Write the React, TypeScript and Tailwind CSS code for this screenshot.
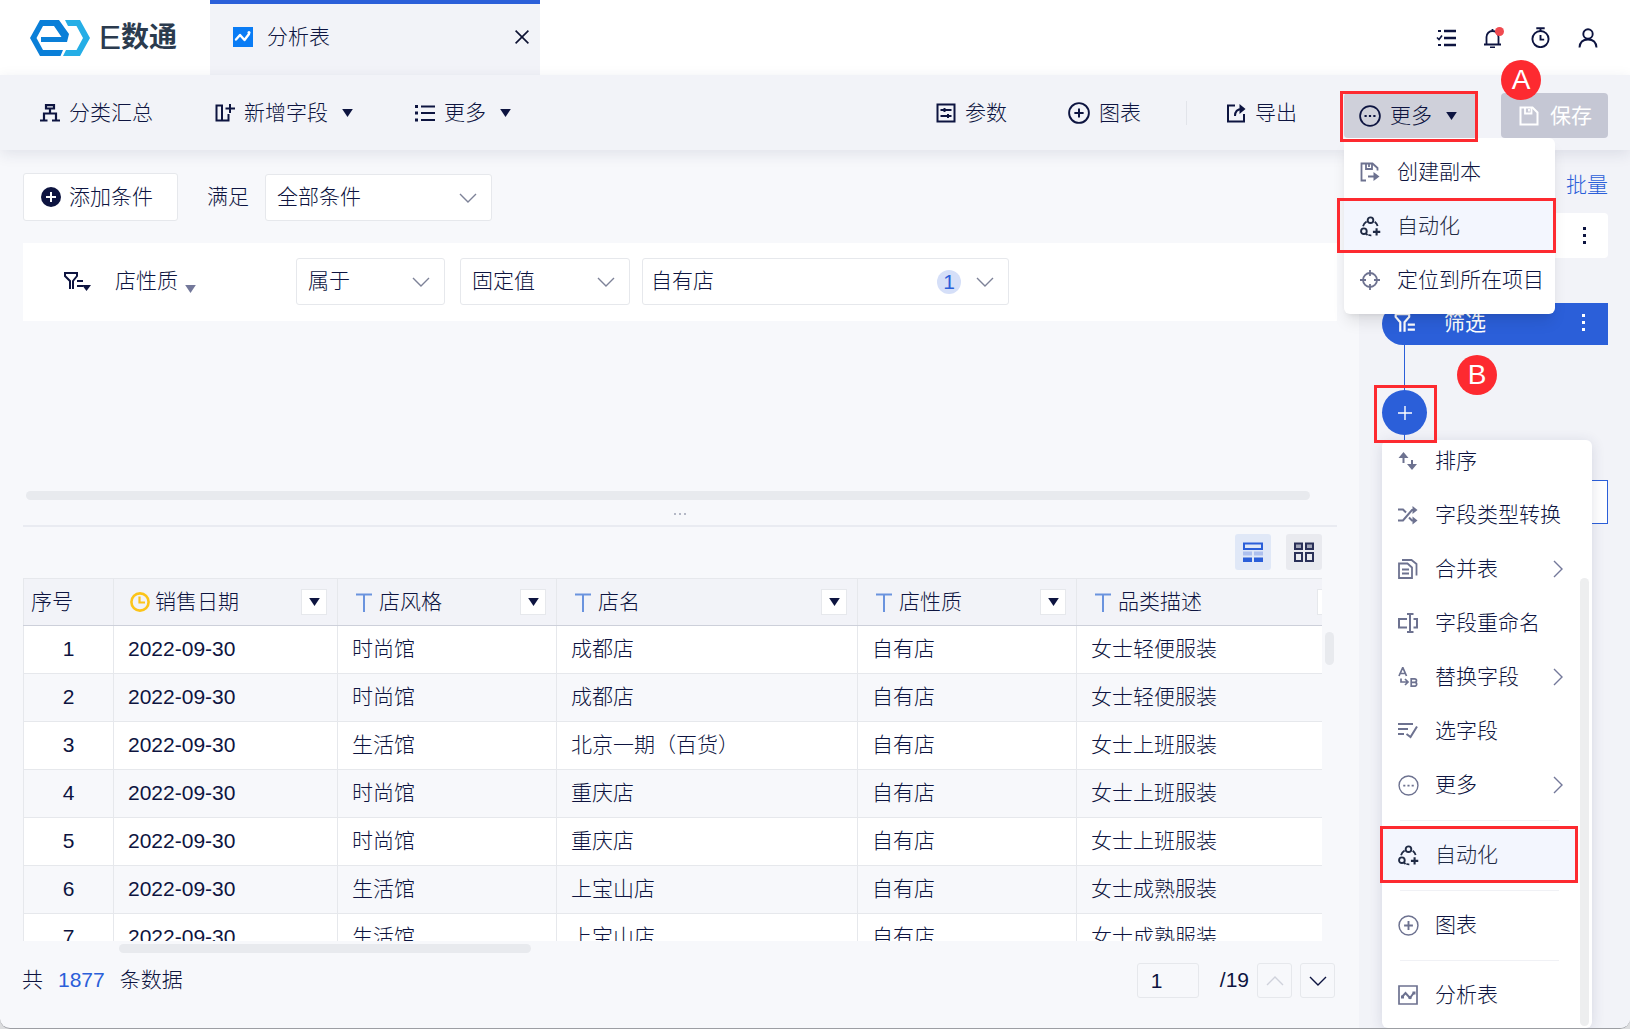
import type { ReactNode } from "react";

const FONT = "font-['Liberation_Sans','Noto_Sans_CJK_SC',sans-serif]";

type IconProps = { children: ReactNode; className?: string; size?: number };

function Icon({ children, className = "", size = 20 }: IconProps) {
  return (
    <svg
      width={size}
      height={size}
      viewBox="0 0 20 20"
      fill="none"
      stroke="currentColor"
      strokeWidth="2"
      className={`shrink-0 ${className}`}
      aria-hidden="true"
    >
      {children}
    </svg>
  );
}

const Caret = ({ className = "" }: { className?: string }) => (
  <svg width="11" height="8" viewBox="0 0 12 9" fill="currentColor" className={`shrink-0 ${className}`} aria-hidden="true">
    <path d="M0 0h12L6 9z" />
  </svg>
);

const Chevron = ({ className = "" }: { className?: string }) => (
  <svg width="18" height="10" viewBox="0 0 18 10" fill="none" stroke="currentColor" strokeWidth="1.4" className={className} aria-hidden="true">
    <path d="M1 1l8 8 8-8" />
  </svg>
);

const ChevronRight = () => (
  <svg width="10" height="18" viewBox="0 0 10 18" fill="none" stroke="currentColor" strokeWidth="1.4" aria-hidden="true">
    <path d="M1 1l8 8-8 8" />
  </svg>
);

const Kebab = () => (
  <svg width="4" height="18" viewBox="0 0 4 18" fill="currentColor" aria-hidden="true">
    <path d="M0 0h3v3H0zM0 7h3v3H0zM0 14h3v3H0z" />
  </svg>
);

const MoreIcon = ({ size = 22, thin = false }: { size?: number; thin?: boolean }) => (
  <Icon size={size}>
    <circle cx="10" cy="10" r="9" strokeWidth={thin ? 1.3 : 1.6} />
    <path d="M5 9.2h2v1.8H5zM9 9.2h2v1.8H9zM13 9.2h2v1.8h-2z" fill="currentColor" stroke="none" />
  </Icon>
);

const PlusCircle = ({ size = 22, thin = false }: { size?: number; thin?: boolean }) => (
  <Icon size={size}>
    <circle cx="10" cy="10" r="9" strokeWidth={thin ? 1.4 : 1.7} />
    <path d="M10 5.8v8.4M5.8 10h8.4" strokeWidth="1.8" />
  </Icon>
);

const AutomationIcon = () => (
  <Icon size={21}>
    <circle cx="10" cy="4" r="2.7" strokeWidth="1.8" />
    <circle cx="3.7" cy="14.5" r="2.7" strokeWidth="1.8" />
    <path d="M6.3 5.2C4.4 6.400 3.300 7.800 2.900 9.800M14 5.500c1.500 1.200 2.400 2.500 2.800 4M5.600 16.600l1.600 1.600M8 17.800c1 .5 1.800 .7 2.800 .6" strokeWidth="1.7" />
    <path d="M15.8 11.6v7M12.3 15.1h7" strokeWidth="2" />
  </Icon>
);

const SaveIcon = () => (
  <Icon>
    <path d="M1.5 1.5h12l5 5v12h-17z" />
    <path d="M6 2v5.5h6.5V2M10 3v2.5" strokeWidth="1.8" />
  </Icon>
);

const FunnelIcon = () => (
  <Icon size={22}>
    <path d="M1 2h13.5M1.5 2v2.5l4.2 4.8V18M13.8 2v2.5L9.6 9.3V18M12.5 11.5H19M12.5 16H19" strokeWidth="2" />
  </Icon>
);

function Logo() {
  return (
    <div className="flex w-[210px] shrink-0 items-center gap-[9px] pl-[30px]">
      <svg width="60" height="36" viewBox="0 0 60 36" aria-label="logo" role="img">
        <path d="M10 0h19l10 14-2 8H11v-5h20.500l-7.500-11H13L6.500 18 13 30h20l-2.500 6H10L0 18z" fill="#0a7fd8" />
        <path d="M35 0h15l10 18-10 18H33l3-6h10.500L53 18 46.500 6H38z" fill="#25aee6" />
      </svg>
      <div className="flex items-center leading-none text-[#2b3b4e]">
        <span className="text-[33px] font-normal">E</span>
        <span className="text-[28px] font-bold">数通</span>
      </div>
    </div>
  );
}

function Header() {
  return (
    <header className="flex h-[75px] shrink-0 bg-white">
      <Logo />
      <div className="flex w-[330px] items-center border-t-4 border-[#2b5fd9] bg-[#f2f3f8] pr-2.5 pb-1.5 pl-[23px]">
        <Icon>
          <path d="M0 0h20v20H0z" fill="#0a7cf5" stroke="none" />
          <path d="M3 12.500l4-4.500 4.500 5 4.500-6" stroke="#fff" strokeWidth="2.400" strokeLinecap="round" strokeLinejoin="round" />
          <path d="M14.500 5.500a1.500 1.500 0 103 0 1.500 1.500 0 10-3 0" fill="#fff" stroke="none" />
        </Icon>
        <span className="ml-[14px] flex-1">分析表</span>
        <button type="button" aria-label="关闭">
          <Icon size={16} className="text-[#0d1233]">
            <path d="M2 2l16 16M18 2L2 18" strokeWidth="2" />
          </Icon>
        </button>
      </div>
      <nav className="ml-auto flex items-center gap-[27px] pr-8">
        <button type="button" aria-label="任务">
          <Icon>
            <path d="M8 3h12M8 10h12M8 17h12" strokeWidth="2.400" />
            <path d="M1 9.500l2 2L6 7.500" strokeWidth="1.600" />
            <path d="M2 2h3v2H2zM2 16h3v2H2z" fill="currentColor" stroke="none" />
          </Icon>
        </button>
        <button type="button" aria-label="消息" className="relative">
          <Icon>
            <path d="M1 16.500h17M3.500 16.500V9a6 6 0 0112 0v7.500M9.500 1v2M7 19.300h5" strokeWidth="1.800" />
          </Icon>
          <span className="absolute -top-px left-3 size-[9px] rounded-full bg-[#f04a50]" />
        </button>
        <button type="button" aria-label="计时">
          <Icon size={21}>
            <circle cx="10" cy="11.500" r="7.700" strokeWidth="1.800" />
            <path d="M6 1.200h8M10 1v3M10 7.500V12h3.500" strokeWidth="1.800" />
          </Icon>
        </button>
        <button type="button" aria-label="用户">
          <Icon>
            <circle cx="10" cy="6" r="4.700" strokeWidth="1.900" />
            <path d="M1.500 19.500C1.800 14.500 5 11.500 10 11.500s8.200 3 8.500 8" strokeWidth="1.900" />
          </Icon>
        </button>
      </nav>
    </header>
  );
}

function ToolButton({ icon, label, caret }: { icon: ReactNode; label: string; caret?: boolean }) {
  return (
    <button type="button" className="flex items-center gap-[9px] whitespace-nowrap">
      {icon}
      <span>{label}</span>
      {caret && <Caret className="ml-[5px]" />}
    </button>
  );
}

const moreMenu = [
  {
    label: "创建副本",
    icon: (
      <Icon>
        <path d="M6 18.500H1.500v-17h11l5 4.500v2.500M6 2v5h6V2M9 2.500v2.500" strokeWidth="1.800" />
        <path d="M8 14.500h7" />
        <path d="M13.500 10l6 4.500-6 4.500z" fill="currentColor" stroke="none" />
      </Icon>
    ),
  },
  { label: "自动化", icon: <AutomationIcon />, active: true },
  {
    label: "定位到所在项目",
    icon: (
      <Icon>
        <circle cx="10" cy="10" r="7" strokeWidth="1.800" />
        <path d="M10 0v6M10 14v6M0 10h6M14 10h6" strokeWidth="1.800" />
      </Icon>
    ),
  },
];

function MoreMenu() {
  return (
    <div className="absolute top-full left-0 w-[211px] rounded-b-md rounded-tr-md bg-white py-[7px] shadow-lg">
      {moreMenu.map((item) => (
        <button
          key={item.label}
          type="button"
          className={`relative flex h-[54px] w-full items-center gap-4 pl-[16px] whitespace-nowrap ${
            item.active ? "bg-[#f3f6fe] text-[#1f2a44]" : ""
          }`}
        >
          <span className={`flex w-[21px] ${item.active ? "" : "text-[#6d7290]"}`}>{item.icon}</span>
          {item.label}
          {item.active && <span className="absolute -top-px bottom-0 -left-[7px] -right-px border-3 border-[#fd2a30]" />}
        </button>
      ))}
    </div>
  );
}

function Toolbar() {
  return (
    <div className="relative z-20 flex h-[75px] shrink-0 items-center bg-[#f2f3f8] pr-[22px] pl-10 shadow-[0_4px_14px_rgba(30,40,80,0.1)]">
      <div className="flex gap-[62px]">
        <ToolButton
          label="分类汇总"
          icon={
            <Icon>
              <path d="M6 2.200h8v3.300H6zM10 5.500v5M4 17v-6.500h12V17M0 17.500h7.500M12 17.500h8" strokeWidth="2.200" />
            </Icon>
          }
        />
        <ToolButton
          label="新增字段"
          caret
          icon={
            <Icon>
              <path d="M1.500 2.500h5.500v15H1.500zM7 17.500h6.500V11M15 1v9M10.500 5.500H20" />
            </Icon>
          }
        />
        <ToolButton
          label="更多"
          caret
          icon={
            <Icon>
              <path d="M6 3.500h14M6 10h14M6 17h14" />
              <path d="M0 2h3v3H0zM0 8.500h3v3H0zM0 15.500h3v3H0z" fill="currentColor" stroke="none" />
            </Icon>
          }
        />
      </div>

      <div className="ml-auto flex items-center">
        <ToolButton
          label="参数"
          icon={
            <Icon>
              <path d="M1.500 1.500h17v17h-17zM4.500 7h11M4.500 13h11" />
              <path d="M8.500 5v4M12 11v4" />
            </Icon>
          }
        />
        <span className="w-[61px]" />
        <ToolButton label="图表" icon={<PlusCircle />} />
        <span className="mr-[39px] ml-[45px] h-6 w-px bg-[#e2e4ea]" />
        <ToolButton
          label="导出"
          icon={
            <Icon>
              <path d="M9 2.500H2v16h16V11" />
              <path d="M9 13c0-5 2-7 7-7" />
              <path d="M13.500 1l6 5-6 5z" fill="currentColor" stroke="none" />
            </Icon>
          }
        />
      </div>

      <div className="relative mt-[18px] ml-[47px] self-start">
        <button type="button" className="flex h-[45px] w-[134px] items-center gap-[9px] rounded-sm bg-[#cfd0da] pl-[15px]">
          <MoreIcon />
          <span>更多</span>
          <Caret className="ml-[5px]" />
        </button>
        <MoreMenu />
        <span className="pointer-events-none absolute -inset-x-1 -top-[2px] -bottom-1 right-0 border-3 border-[#fd2a30]" />
      </div>

      <div className="relative mt-[18px] ml-[23px] self-start">
        <button type="button" className="flex h-[45px] w-[107px] items-center gap-[11px] rounded-sm bg-[#c5c7d4] pl-[18px] font-normal text-white">
          <SaveIcon />
          <span>保存</span>
        </button>
        <span className="absolute -top-[33px] left-0 flex size-10 items-center justify-center rounded-full bg-[#fd2a30] text-[28px] text-white">
          A
        </span>
      </div>
    </div>
  );
}

function Dropdown({ label, value, className, badge }: { label: string; value: string; className: string; badge?: string }) {
  return (
    <div className={`relative ${className}`}>
      <select
        aria-label={label}
        className={`h-[47px] w-full appearance-none rounded-[3px] border border-[#e6e8ec] bg-white pr-10 ${badge ? "pl-2" : "pl-[11px]"}`}
      >
        <option>{value}</option>
      </select>
      {badge && (
        <span className="pointer-events-none absolute top-3 right-12 flex size-6 items-center justify-center rounded-full bg-[#d5dff8] text-[#2b5fd9]">
          {badge}
        </span>
      )}
      <Chevron className="pointer-events-none absolute top-[19px] right-[15px] text-[#7d8298]" />
    </div>
  );
}

function FilterSection() {
  return (
    <section className="flex h-[377px] shrink-0 flex-col border-b-2 border-[#e9ebf1] pt-[23px]">
      <div className="flex items-center">
        <button type="button" className="flex h-12 w-[155px] items-center gap-2 rounded-[3px] border border-[#e6e8ec] bg-white pl-[17px]">
          <Icon>
            <circle cx="10" cy="10" r="10" fill="currentColor" stroke="none" />
            <path d="M10 5v10M5 10h10" stroke="#fff" />
          </Icon>
          添加条件
        </button>
        <span className="ml-[29px]">满足</span>
        <Dropdown label="满足" value="全部条件" className="ml-4 w-[227px]" />
      </div>

      <div className="mt-[22px] flex h-[78px] items-center bg-white pb-0.5 pl-[41px]">
        <svg width="28" height="20" viewBox="0 0 28 20" fill="none" stroke="currentColor" strokeWidth="2" aria-hidden="true">
          <path d="M0 2h14M1 2v3l5 5v8M13 2v3l-4 5v8M13 10h6M13 15h6" />
          <path d="M18 14h9l-4.500 6z" fill="currentColor" stroke="none" />
        </svg>
        <button type="button" className="ml-[23px] flex items-end gap-[7px]">
          店性质
          <Caret className="mb-1 text-[#73789a]" />
        </button>
        <Dropdown label="条件" value="属于" className="ml-[100px] w-[149px]" />
        <Dropdown label="值类型" value="固定值" className="ml-[15px] w-[170px]" />
        <Dropdown label="值" value="自有店" badge="1" className="ml-3 w-[367px]" />
      </div>

      <div className="mt-auto mr-[27px] ml-[3px] h-[9px] shrink-0 rounded-full bg-[#e8eaee]" />
      <div className="flex h-[25px] items-center justify-center gap-[3px] pt-0.5">
        <span className="size-[2px] bg-[#b4b8c6]" />
        <span className="size-[2px] bg-[#b4b8c6]" />
        <span className="size-[2px] bg-[#b4b8c6]" />
      </div>
    </section>
  );
}

const columns = [
  { name: "销售日期", type: "date" },
  { name: "店风格", type: "text" },
  { name: "店名", type: "text" },
  { name: "店性质", type: "text" },
  { name: "品类描述", type: "text" },
];

const rows = [
  ["2022-09-30", "时尚馆", "成都店", "自有店", "女士轻便服装"],
  ["2022-09-30", "时尚馆", "成都店", "自有店", "女士轻便服装"],
  ["2022-09-30", "生活馆", "北京一期（百货）", "自有店", "女士上班服装"],
  ["2022-09-30", "时尚馆", "重庆店", "自有店", "女士上班服装"],
  ["2022-09-30", "时尚馆", "重庆店", "自有店", "女士上班服装"],
  ["2022-09-30", "生活馆", "上宝山店", "自有店", "女士成熟服装"],
  ["2022-09-30", "生活馆", "上宝山店", "自有店", "女士成熟服装"],
];

function DataTable() {
  return (
    <div className="min-h-0 flex-1 overflow-hidden">
      <table className="w-[1330px] table-fixed border-collapse">
        <colgroup>
          <col className="w-[90px]" />
          <col className="w-[224px]" />
          <col className="w-[219px]" />
          <col className="w-[301px]" />
          <col className="w-[219px]" />
          <col className="w-[277px]" />
        </colgroup>
        <thead>
          <tr className="h-[47px] bg-[#f2f3f8]">
            <th className="border border-[#e6e8ec] border-b-[#cdd0da] p-0 pb-px pl-[7px] text-left font-light">序号</th>
            {columns.map((col) => (
              <th key={col.name} className="border border-[#e6e8ec] border-b-[#cdd0da] p-0 pr-2.5 pb-px pl-4 font-light">
                <div className="flex items-center gap-[5px]">
                  {col.type === "date" ? (
                    <Icon className="text-[#fcc419]">
                      <circle cx="10" cy="10" r="8.600" strokeWidth="2.600" />
                      <path d="M9.500 4.500v6H15" strokeWidth="2.200" />
                    </Icon>
                  ) : (
                    <Icon className="text-[#6a93de]">
                      <path d="M2 2.500h16M10 2.500V20" />
                    </Icon>
                  )}
                  <span>{col.name}</span>
                  <button
                    type="button"
                    aria-label={`筛选${col.name}`}
                    className="ml-auto flex size-[26px] items-center justify-center border border-[#e6e8ec] bg-white"
                  >
                    <Caret />
                  </button>
                </div>
              </th>
            ))}
          </tr>
        </thead>
        <tbody>
          {rows.map((row, i) => (
            <tr key={i} className="h-12 bg-white even:bg-[#f7f8fb]">
              <td className="border border-[#e6e8ec] p-0 pb-0.5 text-center">{i + 1}</td>
              {row.map((cell, j) => (
                <td key={j} className="border border-[#e6e8ec] p-0 pb-0.5 pl-[14px] whitespace-nowrap">
                  {cell}
                </td>
              ))}
            </tr>
          ))}
        </tbody>
      </table>
    </div>
  );
}

function ResultSection() {
  return (
    <section className="flex min-h-0 flex-1 flex-col pt-[7px]">
      <div className="mr-[15px] flex justify-end gap-[15px] pb-2">
        <button type="button" aria-label="表格视图" className="flex size-9 items-center justify-center rounded-[3px] bg-[#e0e8f7] text-[#2b5fd9]">
          <Icon>
            <path d="M1 1.500h18v5.500H1z" />
            <path d="M0 9.500h9v4H0zM11 9.500h9v4h-9z" fill="#adc0ee" stroke="none" />
            <path d="M0 15.500h9V20H0zM11 15.500h9V20h-9z" fill="currentColor" stroke="none" />
          </Icon>
        </button>
        <button type="button" aria-label="卡片视图" className="flex size-9 items-center justify-center rounded-[3px] bg-[#e9eaef] text-[#2a3058]">
          <Icon>
            <path d="M1 1.500h7v5.500H1zM12 1.500h7v5.500h-7z" fill="#a2a6b8" />
            <path d="M1 11h7v8H1zM12 11h7v8h-7z" />
          </Icon>
        </button>
      </div>

      <div className="flex min-h-0 flex-1 gap-[3px] pr-[3px]">
        <div className="flex min-w-0 flex-1">
          <DataTable />
        </div>
        <div className="mt-[54px] h-[33px] w-[9px] rounded-full bg-[#e8eaee]" />
      </div>
      <div className="mt-[3px] ml-24 h-[9px] w-[412px] shrink-0 rounded-full bg-[#e8eaee]" />

      <footer className="mt-[10px] flex shrink-0 items-center pb-[30px]">
        <div className="-ml-px flex gap-[15px] pb-0.5">
          <span>共</span>
          <span className="text-[#2b5fd9]">1877</span>
          <span>条数据</span>
        </div>
        <input
          aria-label="页码"
          defaultValue="1"
          className="ml-auto h-[35px] w-[62px] rounded-[3px] border border-[#e6e8ec] bg-transparent pl-[13px]"
        />
        <span className="ml-[21px] pb-0.5">/19</span>
        <button type="button" aria-label="上一页" className="ml-2 flex size-[35px] items-center justify-center rounded-[3px] border border-[#e6e8ec] text-[#cfd2db]">
          <Chevron className="rotate-180" />
        </button>
        <button type="button" aria-label="下一页" className="mr-0.5 ml-2 flex size-[35px] items-center justify-center rounded-[3px] border border-[#e6e8ec]">
          <Chevron />
        </button>
      </footer>
    </section>
  );
}

const stepMenu = [
  {
    label: "排序",
    icon: (
      <Icon>
        <path d="M5.500 4v8M14 9v8" />
        <path d="M.5 7l5-6 5 6zM9 13h10l-5 6z" fill="currentColor" stroke="none" />
      </Icon>
    ),
  },
  {
    label: "字段类型转换",
    icon: (
      <Icon>
        <path d="M0 4.500h5l3 3M0 15.500h5L14 5h3M11 12.500l3 3h3" />
        <path d="M14.500 1l5 4-5 4zM14.500 11.500l5 4-5 4z" fill="currentColor" stroke="none" />
      </Icon>
    ),
  },
  {
    label: "合并表",
    sub: true,
    icon: (
      <Icon>
        <path d="M1 4.500h8.500l4.500 4V19H1zM4 10.500h7M4 14.500h7M4 1h9.500L18.500 5v11.500" strokeWidth="1.800" />
      </Icon>
    ),
  },
  {
    label: "字段重命名",
    icon: (
      <Icon>
        <path d="M9 6H1v8.500h8M9 1h6.500M12 1v18M9 19h6.500M15.500 6h3.500v8.500h-3.500" />
      </Icon>
    ),
  },
  {
    label: "替换字段",
    sub: true,
    icon: (
      <Icon>
        <path d="M1 9l3.800-8.500L8.500 9M2.300 6.500h5M3 11.500V15h6M7 12l3 3-3 3M13.200 11.800h3.300q2 0 2 1.800t-2 1.800h-3.300zM13.200 15.400h3.500q2 0 2 1.900t-2 1.900h-3.500z" strokeWidth="1.700" />
      </Icon>
    ),
  },
  {
    label: "选字段",
    icon: (
      <Icon>
        <path d="M0 3h15M0 8h10M0 13h6M8.500 13l4 3L19 5.500" />
      </Icon>
    ),
  },
  { label: "更多", sub: true, icon: <MoreIcon size={21} thin /> },
  { divider: true },
  { label: "自动化", active: true, icon: <AutomationIcon /> },
  { divider: true },
  { label: "图表", icon: <PlusCircle size={21} thin /> },
  { divider: true },
  {
    label: "分析表",
    icon: (
      <Icon>
        <path d="M1 1h18v18H1z" strokeWidth="1.700" />
        <path d="M4 12l3.500-4 4.500 5 4-5.500" />
        <path d="M3 10.500h3v3H3zM10.500 11h3v3h-3zM14.500 6.500h3v3h-3z" fill="currentColor" stroke="none" />
      </Icon>
    ),
  },
];

function StepMenu() {
  return (
    <div className="absolute top-full left-0 z-10 mt-[5px] w-[210px] rounded-md bg-white pt-px pb-1.5 shadow-[0_2px_14px_rgba(40,50,90,0.14)]">
      <div className="-mt-[7px] pr-[14px]">
        {stepMenu.map((item, i) =>
          item.divider ? (
            <hr key={i} className="mt-2 mr-[19px] mb-[7px] ml-[18px] border-[#f0f1f5]" />
          ) : (
            <button
              key={i}
              type="button"
              className={`relative flex h-[54px] w-full items-center gap-4 pl-[16px] whitespace-nowrap ${
                item.active ? "bg-[#f3f6fe] text-[#1f2a44]" : ""
              }`}
            >
              <span className={`flex w-[21px] ${item.active ? "" : "text-[#6d7290]"}`}>{item.icon}</span>
              {item.label}
              {item.sub && (
                <span className="mr-[15px] ml-auto text-[#73789a]">
                  <ChevronRight />
                </span>
              )}
              {item.active && <span className="absolute -top-[2px] right-0 -bottom-px -left-[2px] border-3 border-[#fd2a30]" />}
            </button>
          ),
        )}
      </div>
      <span className="absolute top-[138px] right-[3px] bottom-0.5 w-[9px] rounded-full bg-[#edeeef]" />
    </div>
  );
}

function StepPanel() {
  return (
    <aside className="w-[271px] shrink-0 bg-[#f2f3f8] pt-[19px] pr-[22px] pl-[23px]">
      <div className="flex h-11 justify-end">
        <a href="#" className="leading-8 text-[#2b5fd9]">
          批量
        </a>
      </div>
      <div className="flex h-[45px] items-center justify-end rounded-sm bg-white pr-[21px]">
        <button type="button" aria-label="操作">
          <Kebab />
        </button>
      </div>
      <div className="ml-[22px] h-[45px] w-px bg-[#2b5fd9]" />
      <div className="flex h-[42px] items-center rounded-l-full rounded-r-[3px] bg-[#2b5fd9] pr-[22px] pb-0.5 pl-3 text-white">
        <FunnelIcon />
        <span className="ml-7 flex-1 font-normal">筛选</span>
        <button type="button" aria-label="操作">
          <Kebab />
        </button>
      </div>
      <div className="relative">
        <div className="ml-[22px] h-[45px] w-px bg-[#2b5fd9]" />
        <span className="absolute top-[10px] left-[75px] flex size-10 items-center justify-center rounded-full bg-[#fd2a30] text-[28px] text-white">
          B
        </span>
      </div>
      <div className="relative w-[45px]">
        <button type="button" aria-label="添加步骤" className="flex size-[45px] items-center justify-center rounded-full bg-[#2b5fd9] text-white">
          <Icon size={14}>
            <path d="M10 0v20M0 10h20" strokeWidth="2" />
          </Icon>
        </button>
        <StepMenu />
        <span className="pointer-events-none absolute -top-[5px] -right-[10px] -bottom-2 -left-2 z-20 border-3 border-[#fd2a30]" />
      </div>
      <div className="ml-[22px] h-[45px] w-px bg-[#2b5fd9]" />
      <div className="h-11 rounded-l-full rounded-r-[3px] border border-[#2b5fd9] bg-white" />
    </aside>
  );
}

export default function App() {
  return (
    <div className="h-screen overflow-hidden bg-[#dcdddf]">
      <div
        className={`flex h-full flex-col overflow-hidden rounded-b-[10px] border-b border-[#9c9ea3] bg-[#f7f8fb] text-[21px] leading-8 font-light text-[#0d1440] ${FONT}`}
      >
        <Header />
        <Toolbar />
        <div className="flex min-h-0 flex-1">
          <main className="flex min-w-0 flex-1 flex-col pr-[22px] pl-[23px]">
            <FilterSection />
            <ResultSection />
          </main>
          <StepPanel />
        </div>
      </div>
    </div>
  );
}
